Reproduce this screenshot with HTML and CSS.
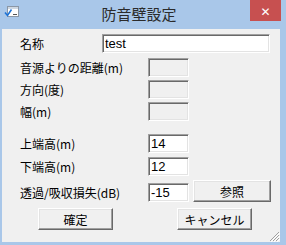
FILE: index.html
```html
<html>
    <head>
        <meta charset="utf-8">
        <link rel="stylesheet" href="styles.css">
    </head>
    <body>
        <div class="window">
            <div class="titlebar">
                <svg class="appicon" width="16" height="13" viewBox="0 0 16 13">
                    <rect x="3.5" y="1.5" width="11" height="10" fill="#ffffff" stroke="#8b97a6"/>
                    <rect x="4" y="2" width="10" height="2" fill="#cfd8e3"/>
                    <path d="M1 7.5 L3.5 10.5 L7.5 4.5" fill="none" stroke="#1e73d6" stroke-width="1.6"/>
                    <path d="M9 9.5 H13" stroke="#555555" stroke-width="1"/>
                </svg>
                <div class="title">防音壁設定</div>
                <div class="close">✕</div>
            </div>
            <div class="client">
                <div class="row row-name">
                    <span class="label wide">名称</span>
                    <input class="field name" type="text" value="test">
                </div>
                <div class="group top">
                    <div class="row">
                        <span class="label">音源よりの距離(m)</span>
                        <span class="field small disabled"></span>
                    </div>
                    <div class="row">
                        <span class="label">方向(度)</span>
                        <span class="field small disabled"></span>
                    </div>
                    <div class="row">
                        <span class="label">幅(m)</span>
                        <span class="field small disabled"></span>
                    </div>
                </div>
                <div class="group bottom">
                    <div class="row">
                        <span class="label">上端高(m)</span>
                        <input class="field small" type="text" value="14">
                    </div>
                    <div class="row">
                        <span class="label">下端高(m)</span>
                        <input class="field small" type="text" value="12">
                    </div>
                    <div class="row row-loss">
                        <span class="label">透過/吸収損失(dB)</span>
                        <input class="field small" type="text" value="-15">
                        <button class="btn ref">参照</button>
                    </div>
                </div>
                <div class="buttons">
                    <button class="btn">確定</button>
                    <button class="btn">キャンセル</button>
                </div>
                <svg class="grip" width="12" height="12" viewBox="0 0 12 12">
                    <path d="M11 2 L2 11 M11 5 L5 11 M11 8 L8 11" stroke="#a0a0a0" stroke-width="1"/>
                    <path d="M12 3 L3 12 M12 6 L6 12 M12 9 L9 12" stroke="#ffffff" stroke-width="1"/>
                </svg>
            </div>
        </div>
    </body>
</html>
```

FILE: styles.css
```css
body {
    margin: 0;
    background-color: #a9c7e9;
}
.window {
    width: 286px;
    height: 245px;
    display: flex;
    flex-direction: column;
    background-color: #a9c7e9;
    font-family: "Noto Sans CJK JP", "DejaVu Sans", sans-serif;
}
.titlebar {
    height: 29px;
    display: grid;
    grid-template-columns: 1fr auto 1fr;
    align-items: start;
}
.appicon {
    margin: 5px 0 0 4px;
}
.title {
    font-size: 15px;
    line-height: 15px;
    color: #2b2b2b;
    margin: 6px 8px 0 0;
}
.close {
    justify-self: end;
    width: 31px;
    height: 21px;
    margin-right: 5px;
    background-color: #c75050;
    color: #ffffff;
    font-size: 12px;
    font-weight: bold;
    line-height: 21px;
    text-align: center;
}
.client {
    position: relative;
    flex: 1;
    margin: 0 6px 3px 2px;
    padding: 5px 0 0 18px;
    background-color: #f0f0f0;
    font-size: 12px;
    color: #000000;
}
.row {
    display: flex;
    align-items: center;
}
.label {
    width: 128px;
    line-height: 14px;
    white-space: nowrap;
}
.label.wide {
    width: 82px;
}
.field {
    box-sizing: border-box;
    height: 19px;
    margin: 0;
    padding: 0 2px;
    border-top: 1px solid #a0a0a0;
    border-left: 1px solid #a0a0a0;
    border-bottom: 1px solid #ffffff;
    border-right: 1px solid #ffffff;
    box-shadow: inset 1px 1px 0 #696969, inset -1px -1px 0 #e3e3e3;
    background-color: #ffffff;
    font-family: "Liberation Sans", sans-serif;
    font-size: 13px;
    color: #000000;
    outline: none;
}
.field.name {
    width: 168px;
}
.field.small {
    width: 41px;
}
.field.disabled {
    background-color: #f0f0f0;
}
.group.top {
    margin-top: 5px;
    display: flex;
    flex-direction: column;
    gap: 3px;
}
.group.bottom {
    margin-top: 13px;
    display: flex;
    flex-direction: column;
    gap: 4px;
}
.row-loss {
    margin-top: 3px;
}
.btn {
    box-sizing: border-box;
    width: 78px;
    height: 22px;
    margin: 0;
    padding: 0;
    border-top: 1px solid #ffffff;
    border-left: 1px solid #ffffff;
    border-bottom: 1px solid #696969;
    border-right: 1px solid #696969;
    box-shadow: inset -1px -1px 0 #a0a0a0, inset 1px 1px 0 #e3e3e3;
    background-color: #f0f0f0;
    font-family: "Noto Sans CJK JP", sans-serif;
    font-size: 12px;
    color: #000000;
}
.btn.ref {
    margin-left: 4px;
    margin-top: -3px;
}
.buttons {
    display: flex;
    gap: 64px;
    margin: 6px 0 0 18px;
}
.buttons .btn {
    width: 75px;
}
.grip {
    position: absolute;
    right: 0;
    bottom: 0;
}
```
